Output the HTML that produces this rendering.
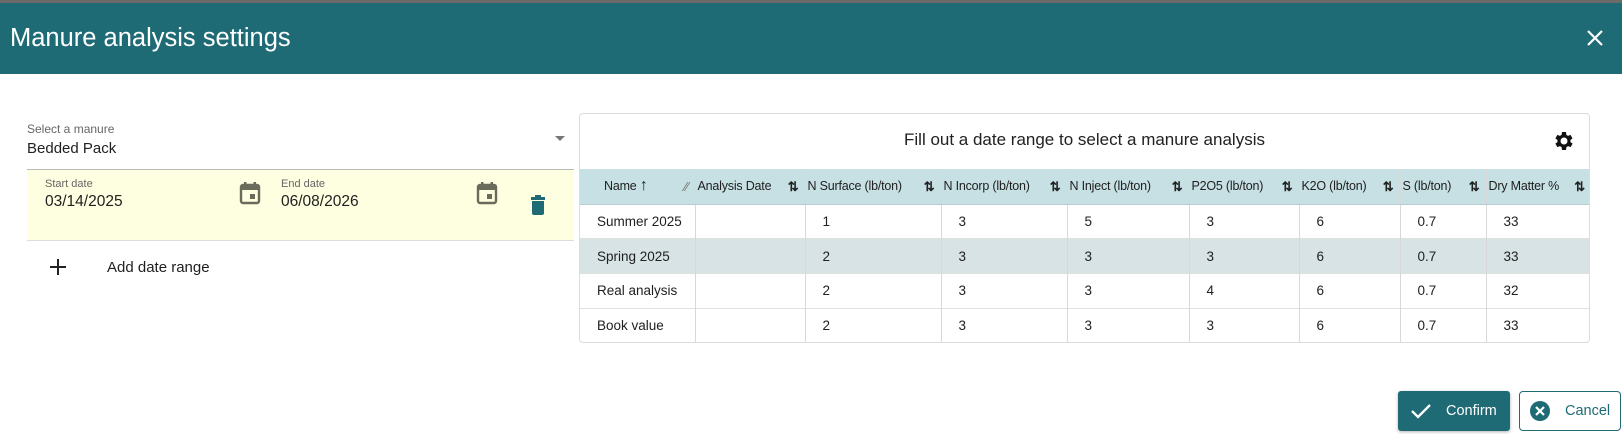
<!DOCTYPE html>
<html><head><meta charset="utf-8"><style>
*{box-sizing:border-box;margin:0;padding:0}
body{width:1622px;height:434px;overflow:hidden;background:#fff;font-family:"Liberation Sans",sans-serif;color:#212121;position:relative}
.abs{position:absolute}
.hdr{left:0;top:0;width:1622px;height:74px;background:#1f6b75;border-top:3px solid #6b6b6b}
.hdr .t{left:10px;top:21px;font-size:25.5px;color:#fff}
table{border-collapse:collapse;font-size:13.5px;table-layout:fixed}
td,th{border-right:1px solid #d8d8d8;height:34.7px;white-space:nowrap;overflow:hidden}
th{background:#c6e0e4;font-weight:normal;text-align:left;padding-left:2px;border-bottom:1px solid #b8cdd1;height:35px;font-size:12.5px;letter-spacing:-0.2px;position:relative}
td{border-top:1px solid #e0e0e0;padding-left:17px}
tr.alt td{background:#d7e3e5}
td:last-child,th:last-child{border-right:none}
.si{position:absolute;right:6px;top:10px;font-size:13px;font-weight:bold}
</style></head><body>
<div class="abs hdr"><div class="abs t">Manure analysis settings</div>
<svg class="abs" style="left:1585px;top:25px" width="20" height="20" viewBox="0 0 20 20"><path d="M3 3L17 17M17 3L3 17" stroke="#fff" stroke-width="2.2"/></svg></div>

<div class="abs" style="left:27px;top:122px;font-size:12px;color:#666">Select a manure</div>
<div class="abs" style="left:27px;top:140px;font-size:15px">Bedded Pack</div>
<svg class="abs" style="left:555px;top:136px" width="10" height="6"><path d="M0 0L10 0L5 5Z" fill="#777"/></svg>
<div class="abs" style="left:27px;top:169px;width:547px;height:72px;background:#fefee0;border-top:1px solid #bbb;border-bottom:1px solid #ddd"></div>
<div class="abs" style="left:45px;top:178px;font-size:11px;color:#666">Start date</div>
<div class="abs" style="left:45px;top:193px;font-size:15.5px">03/14/2025</div>
<div class="abs" style="left:281px;top:178px;font-size:11px;color:#666">End date</div>
<div class="abs" style="left:281px;top:193px;font-size:15.5px">06/08/2026</div>
<svg class="abs" style="left:239px;top:181px" width="22" height="24" viewBox="0 0 22 24"><rect x="2" y="4" width="18" height="18" rx="2" fill="none" stroke="#6b6b5b" stroke-width="2.4"/><rect x="2" y="4" width="18" height="5" fill="#6b6b5b"/><rect x="5" y="1" width="2.5" height="4" fill="#6b6b5b"/><rect x="14.5" y="1" width="2.5" height="4" fill="#6b6b5b"/><rect x="11" y="13" width="5" height="5" fill="#6b6b5b"/></svg>
<svg class="abs" style="left:476px;top:181px" width="22" height="24" viewBox="0 0 22 24"><rect x="2" y="4" width="18" height="18" rx="2" fill="none" stroke="#6b6b5b" stroke-width="2.4"/><rect x="2" y="4" width="18" height="5" fill="#6b6b5b"/><rect x="5" y="1" width="2.5" height="4" fill="#6b6b5b"/><rect x="14.5" y="1" width="2.5" height="4" fill="#6b6b5b"/><rect x="11" y="13" width="5" height="5" fill="#6b6b5b"/></svg>
<svg class="abs" style="left:530px;top:195px" width="16" height="20" viewBox="0 0 16 20"><rect x="1" y="2" width="14" height="3" fill="#1f6b75"/><rect x="5" y="0" width="6" height="3" fill="#1f6b75"/><path d="M2 6H14V18Q14 20 12 20H4Q2 20 2 18Z" fill="#1f6b75"/></svg>
<svg class="abs" style="left:50px;top:259px" width="16" height="16"><path d="M8 0V16M0 8H16" stroke="#222" stroke-width="2"/></svg>
<div class="abs" style="left:107px;top:259px;font-size:15px">Add date range</div>

<div class="abs" style="left:579px;top:113px;width:1011px;height:230px;border:1px solid #ddd;border-radius:4px;overflow:hidden">
<div class="abs" style="left:0;top:16px;width:1009px;text-align:center;font-size:17px">Fill out a date range to select a manure analysis</div>
<svg class="abs" style="left:972px;top:15px" width="24" height="24" viewBox="0 0 24 24"><path fill="#111" d="M19.4 13a7.8 7.8 0 0 0 0-2l2.1-1.6-2-3.5-2.5 1a7.6 7.6 0 0 0-1.7-1L15 3h-4l-.4 2.9a7.6 7.6 0 0 0-1.7 1l-2.5-1-2 3.5L6.5 11a7.8 7.8 0 0 0 0 2l-2.1 1.6 2 3.5 2.5-1a7.6 7.6 0 0 0 1.7 1L11 21h4l.4-2.9a7.6 7.6 0 0 0 1.7-1l2.5 1 2-3.5zM13 15.5A3.5 3.5 0 1 1 13 8.5a3.5 3.5 0 0 1 0 7z" transform="translate(-1 0)"/></svg>
<table class="abs" style="left:0;top:55px;width:1011px">
<colgroup><col style="width:115px"><col style="width:110px"><col style="width:136px"><col style="width:126px"><col style="width:122px"><col style="width:110px"><col style="width:101px"><col style="width:86px"><col style="width:105px"></colgroup>
<tr><th style="padding-left:24px">Name <span style="font-size:16px;font-weight:bold">&#8593;</span><span class="si" style="color:#777;font-weight:normal">&#8260;&#8260;</span></th><th>Analysis Date<span class="si">&#8645;</span></th><th>N Surface (lb/ton)<span class="si">&#8645;</span></th><th>N Incorp (lb/ton)<span class="si">&#8645;</span></th><th>N Inject (lb/ton)<span class="si">&#8645;</span></th><th>P2O5 (lb/ton)<span class="si">&#8645;</span></th><th>K2O (lb/ton)<span class="si">&#8645;</span></th><th>S (lb/ton)<span class="si">&#8645;</span></th><th>Dry Matter %<span class="si">&#8645;</span></th></tr>
<tr><td>Summer 2025</td><td></td><td>1</td><td>3</td><td>5</td><td>3</td><td>6</td><td>0.7</td><td>33</td></tr>
<tr class="alt"><td>Spring 2025</td><td></td><td>2</td><td>3</td><td>3</td><td>3</td><td>6</td><td>0.7</td><td>33</td></tr>
<tr><td>Real analysis</td><td></td><td>2</td><td>3</td><td>3</td><td>4</td><td>6</td><td>0.7</td><td>32</td></tr>
<tr><td>Book value</td><td></td><td>2</td><td>3</td><td>3</td><td>3</td><td>6</td><td>0.7</td><td>33</td></tr>
</table></div>

<div class="abs" style="left:1398px;top:391px;width:112px;height:40px;background:#1f6b75;border-radius:3px;box-shadow:0 1px 3px rgba(0,0,0,.3)"></div>
<svg class="abs" style="left:1410px;top:402px" width="22" height="18"><path d="M2 9L8 15L20 3" stroke="#fff" stroke-width="2.3" fill="none"/></svg>
<div class="abs" style="left:1446px;top:403px;font-size:14.5px;color:#fff">Confirm</div>
<div class="abs" style="left:1519px;top:391px;width:102px;height:40px;border:1px solid #1f6b75;border-radius:4px"></div>
<svg class="abs" style="left:1529px;top:400px" width="22" height="22" viewBox="0 0 22 22"><circle cx="11" cy="11" r="10" fill="#1f6b75"/><path d="M7 7L15 15M15 7L7 15" stroke="#fff" stroke-width="2.2"/></svg>
<div class="abs" style="left:1565px;top:403px;font-size:14.5px;color:#1f6b75">Cancel</div>
</body></html>
